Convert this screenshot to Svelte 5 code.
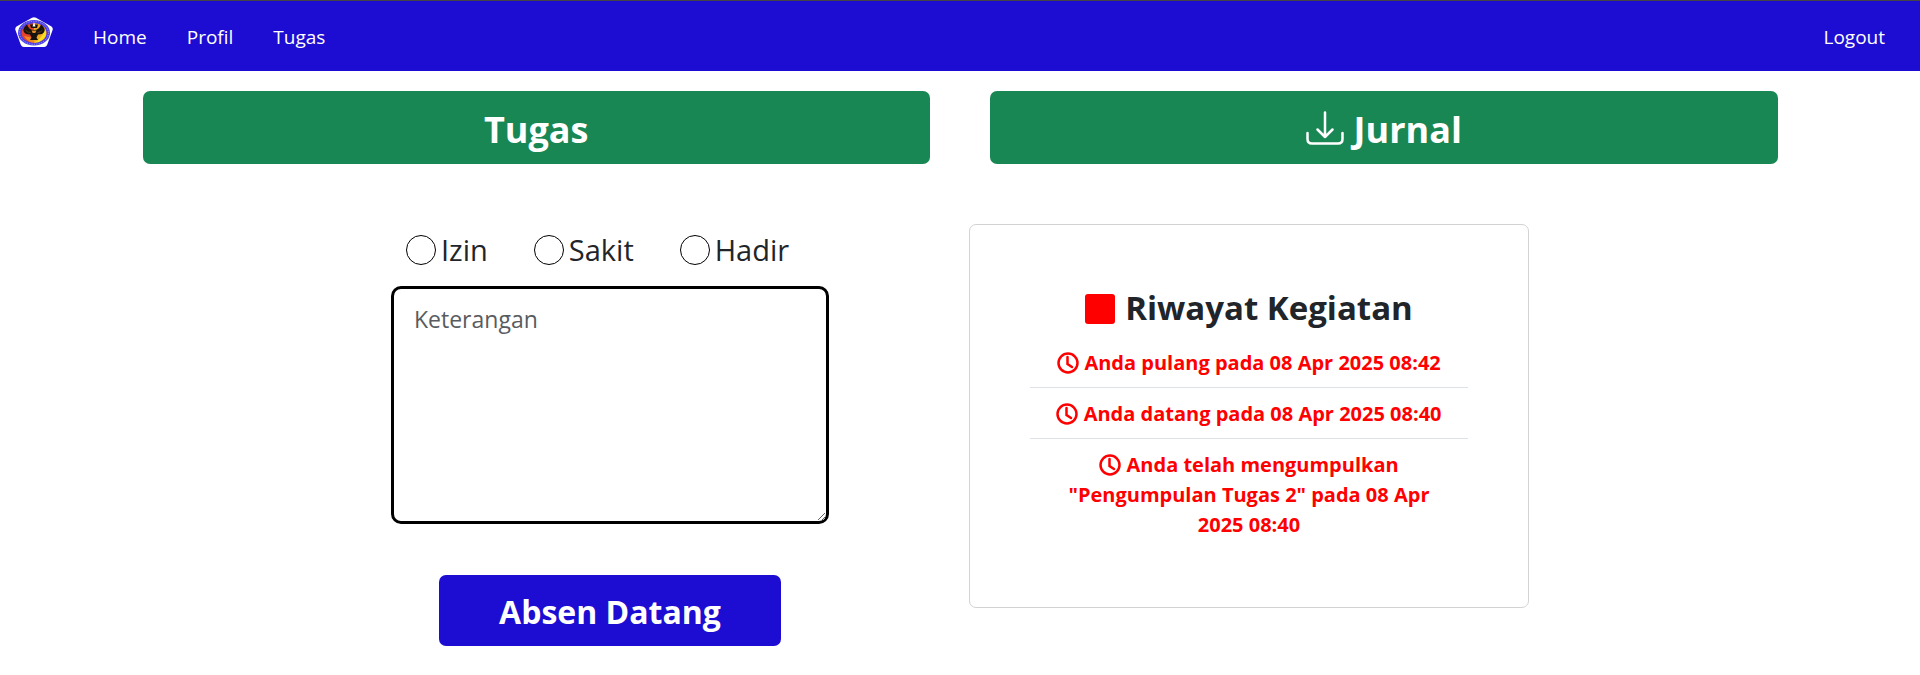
<script>
  const links = ['Home', 'Profil', 'Tugas'];
  const statuses = ['Izin', 'Sakit', 'Hadir'];
  const history = [
    'Anda pulang pada 08 Apr 2025 08:42',
    'Anda datang pada 08 Apr 2025 08:40',
    'Anda telah mengumpulkan "Pengumpulan Tugas 2" pada 08 Apr 2025 08:40'
  ];
  let status = $state('');
  let note = $state('');
</script>

<nav class="navbar">
  <a class="brand" href="#home" aria-label="Beranda">
    <svg viewBox="0 0 38 30" width="38" height="30" aria-hidden="true">
      <path d="M17 .8 Q19 -.4 21 .8 L36.500 9.500 Q38.300 11 37.600 13 L32.500 27 Q31.500 30 29 30 H9 Q6.500 30 5.500 27 L.4 13 Q-.3 11 1.500 9.500 Z" fill="#fff" />
      <ellipse cx="19" cy="15.800" rx="16" ry="12.800" fill="#4a3ee6" />
      <ellipse cx="19" cy="15.800" rx="14.400" ry="11.500" fill="none" stroke="#9d96f4" stroke-width="1" stroke-dasharray="1.200 1.200" />
      <ellipse cx="19" cy="16" rx="12.400" ry="9.800" fill="#e2452a" />
      <path d="M19 6.200 A12.400 9.800 0 0 1 19 25.800 Z" fill="#f0a825" />
      <path d="M30 12 Q33 18 28 22.500 Q24 26 19 25.800 Q27 22 30 12 Z" fill="#f7e11c" />
      <path d="M9 19 Q13 25.500 19 25.800 V21 Z" fill="#f08a20" />
      <path d="M12 7.500 Q14 13 19 13 Q24 13 26 7.500 Q30.500 11 29.500 14 Q28.500 17.500 23 17.500 L21.500 20.500 L23 23 H15 L16.500 20.500 L15 17.500 Q9.500 17.500 8.500 14 Q7.500 11 12 7.500 Z" fill="#17120d" />
      <path d="M15 7.500 H23 L22 11 H16 Z" fill="#17120d" />
      <path d="M19 5 L20.500 9.500 H17.500 Z" fill="#fff" />
      <path d="M16.500 13.500 H21.500 L20.300 16 H17.700 Z" fill="#e08a25" />
      <path d="M10.500 13 Q12 15.500 15.500 15.500 M27.500 13 Q26 15.500 22.500 15.500" fill="none" stroke="#8a5523" stroke-width=".6" />
    </svg>
  </a>
  {#each links as link}
    <a href={`#${link.toLowerCase()}`}>{link}</a>
  {/each}
  <a class="logout" href="#logout">Logout</a>
</nav>

<main>
  <div class="actions">
    <button type="button">Tugas</button>
    <button type="button">
      <svg class="download" viewBox="0 0 38 34" aria-hidden="true">
        <path d="M19 1.500 V26 M11.500 18.500 L19 26 L26.500 18.500 M1.500 22 V28 Q1.500 32.500 6 32.500 H32 Q36.500 32.500 36.500 28 V22" />
      </svg>
      Jurnal
    </button>
  </div>

  <div class="content">
    <form onsubmit={(e) => e.preventDefault()}>
      <div class="choices" role="radiogroup" aria-label="Kehadiran">
        {#each statuses as item}
          <label><input type="radio" name="status" value={item} bind:group={status} />{item}</label>
        {/each}
      </div>
      <textarea aria-label="Keterangan" placeholder="Keterangan" bind:value={note}></textarea>
      <button class="submit" type="submit">Absen Datang</button>
    </form>

    <section class="card">
      <h2><span class="square"></span>Riwayat Kegiatan</h2>
      <ul>
        {#each history as entry}
          <li>
            <svg class="clock" viewBox="0 0 22 22" aria-hidden="true">
              <circle cx="11" cy="11" r="9.500" />
              <path d="M10.500 5 V12 L15 15" />
            </svg>
            {entry}
          </li>
        {/each}
      </ul>
    </section>
  </div>
</main>

<style>
  :global(body) {
    background: #fff;
    color: #212529;
    font-family: 'Open Sans', 'Noto Sans', sans-serif;
    font-size: 20px;
    line-height: 30px;
  }
  :global(*) {
    box-sizing: border-box;
  }
  .navbar {
    display: flex;
    align-items: center;
    gap: 40px;
    min-height: 71px;
    padding: 2px 35px 0 15px;
    border-top: 1px solid #444;
    background: #1d0dd2;
    font-size: 19px;
  }
  .navbar a {
    color: #fff;
    text-decoration: none;
  }
  .brand {
    display: flex;
    padding-bottom: 10px;
  }
  .navbar .logout {
    margin-left: auto;
  }
  main {
    max-width: 1635px;
    margin: 0 auto;
    padding: 20px 0 28px;
  }
  .actions {
    display: grid;
    grid-template-columns: 1fr 1fr;
    gap: 60px;
  }
  button {
    border: 0;
    border-radius: 7px;
    background: #1d0dd2;
    color: #fff;
    font-family: inherit;
    font-weight: 700;
    cursor: pointer;
  }
  .actions button {
    display: flex;
    align-items: center;
    justify-content: center;
    gap: 10px;
    padding: 16px 20px 12px;
    background: #198754;
    font-size: 36px;
    line-height: 45px;
  }
  .download {
    width: 38px;
    height: 34px;
    margin-bottom: 4px;
    fill: none;
    stroke: #fff;
    stroke-width: 2.5;
    stroke-linecap: round;
    stroke-linejoin: round;
  }
  .content {
    display: flex;
    flex-wrap: wrap;
    align-items: flex-start;
    justify-content: center;
    gap: 60px 140px;
    padding-top: 60px;
  }
  form {
    display: flex;
    flex-direction: column;
    align-items: center;
    width: 438px;
  }
  .choices {
    display: flex;
    gap: 46px;
    align-self: stretch;
    padding: 2px 15px 12px;
    font-size: 29px;
    line-height: 48px;
  }
  .choices label {
    display: flex;
    align-items: center;
    gap: 5px;
  }
  .choices input {
    appearance: none;
    width: 30px;
    height: 30px;
    margin: 0;
    border: 1px solid #000;
    border-radius: 50%;
    background: #fff;
  }
  .choices input:checked {
    border: 9px solid #1d0dd2;
  }
  textarea {
    display: block;
    width: 100%;
    height: 238px;
    padding: 11px 20px;
    border: 3px solid #000;
    border-radius: 10px;
    outline: 0;
    background: #fff;
    color: #212529;
    font-family: inherit;
    font-size: 23px;
    line-height: 38px;
  }
  textarea::placeholder {
    color: #595c5f;
  }
  .submit {
    margin-top: 51px;
    padding: 14px 60px 12px;
    font-size: 32px;
    line-height: 45px;
  }
  .card {
    width: 560px;
    padding: 60px 60px 58px;
    border: 1px solid #d3d3d3;
    border-radius: 7px;
    text-align: center;
  }
  h2 {
    display: flex;
    align-items: center;
    justify-content: center;
    gap: 10px;
    margin: 0 0 7px;
    font-size: 33px;
    line-height: 45px;
  }
  .square {
    width: 30px;
    height: 30px;
    margin-top: 2px;
    border-radius: 3px;
    background: #f00;
  }
  ul {
    margin: 0;
    padding: 0;
    list-style: none;
  }
  li {
    padding: 11px 20px 9px;
    color: #f00;
    font-weight: 700;
  }
  li + li {
    border-top: 1px solid #dee2e6;
  }
  .clock {
    width: 22px;
    height: 22px;
    vertical-align: -4px;
    fill: none;
    stroke: #f00;
    stroke-width: 2.5;
    stroke-linecap: round;
  }
</style>
